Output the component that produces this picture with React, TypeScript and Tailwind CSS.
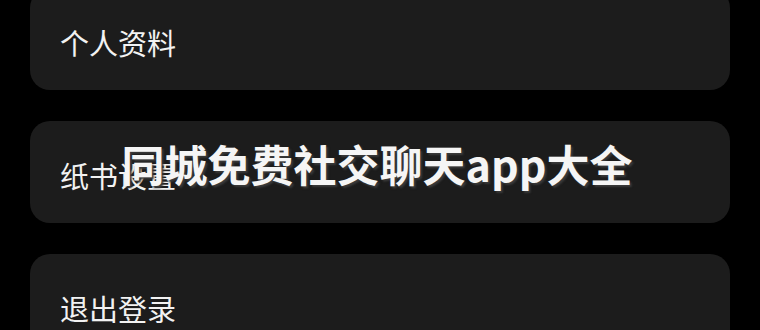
const items = ["个人资料", "纸书设置", "退出登录"]

export default function App() {
  return (
    <div
      className="relative h-[330px] w-[760px] overflow-hidden bg-black"
      style={{ fontFamily: '"Noto Sans CJK SC", "Noto Sans", sans-serif' }}
    >
      <div className="-mt-3 flex flex-col gap-[31px] px-[30px]">
        {items.map((label) => (
          <div
            key={label}
            className="flex h-[102px] items-center rounded-[20px] bg-[#1c1c1c] px-[30px] pt-[6px]"
          >
            <span className="text-[29px] leading-none text-[#f2f2f2]">{label}</span>
          </div>
        ))}
      </div>

      {/* watermark overlay */}
      <div className="absolute left-0 right-0 top-[136px] flex justify-center">
        <span className="pr-[6px] text-[43px] font-bold leading-[54px] text-[#f5f5f5] [text-shadow:2px_2px_2px_#3a3a3a]">
          同城免费社交聊天app大全
        </span>
      </div>
    </div>
  )
}
